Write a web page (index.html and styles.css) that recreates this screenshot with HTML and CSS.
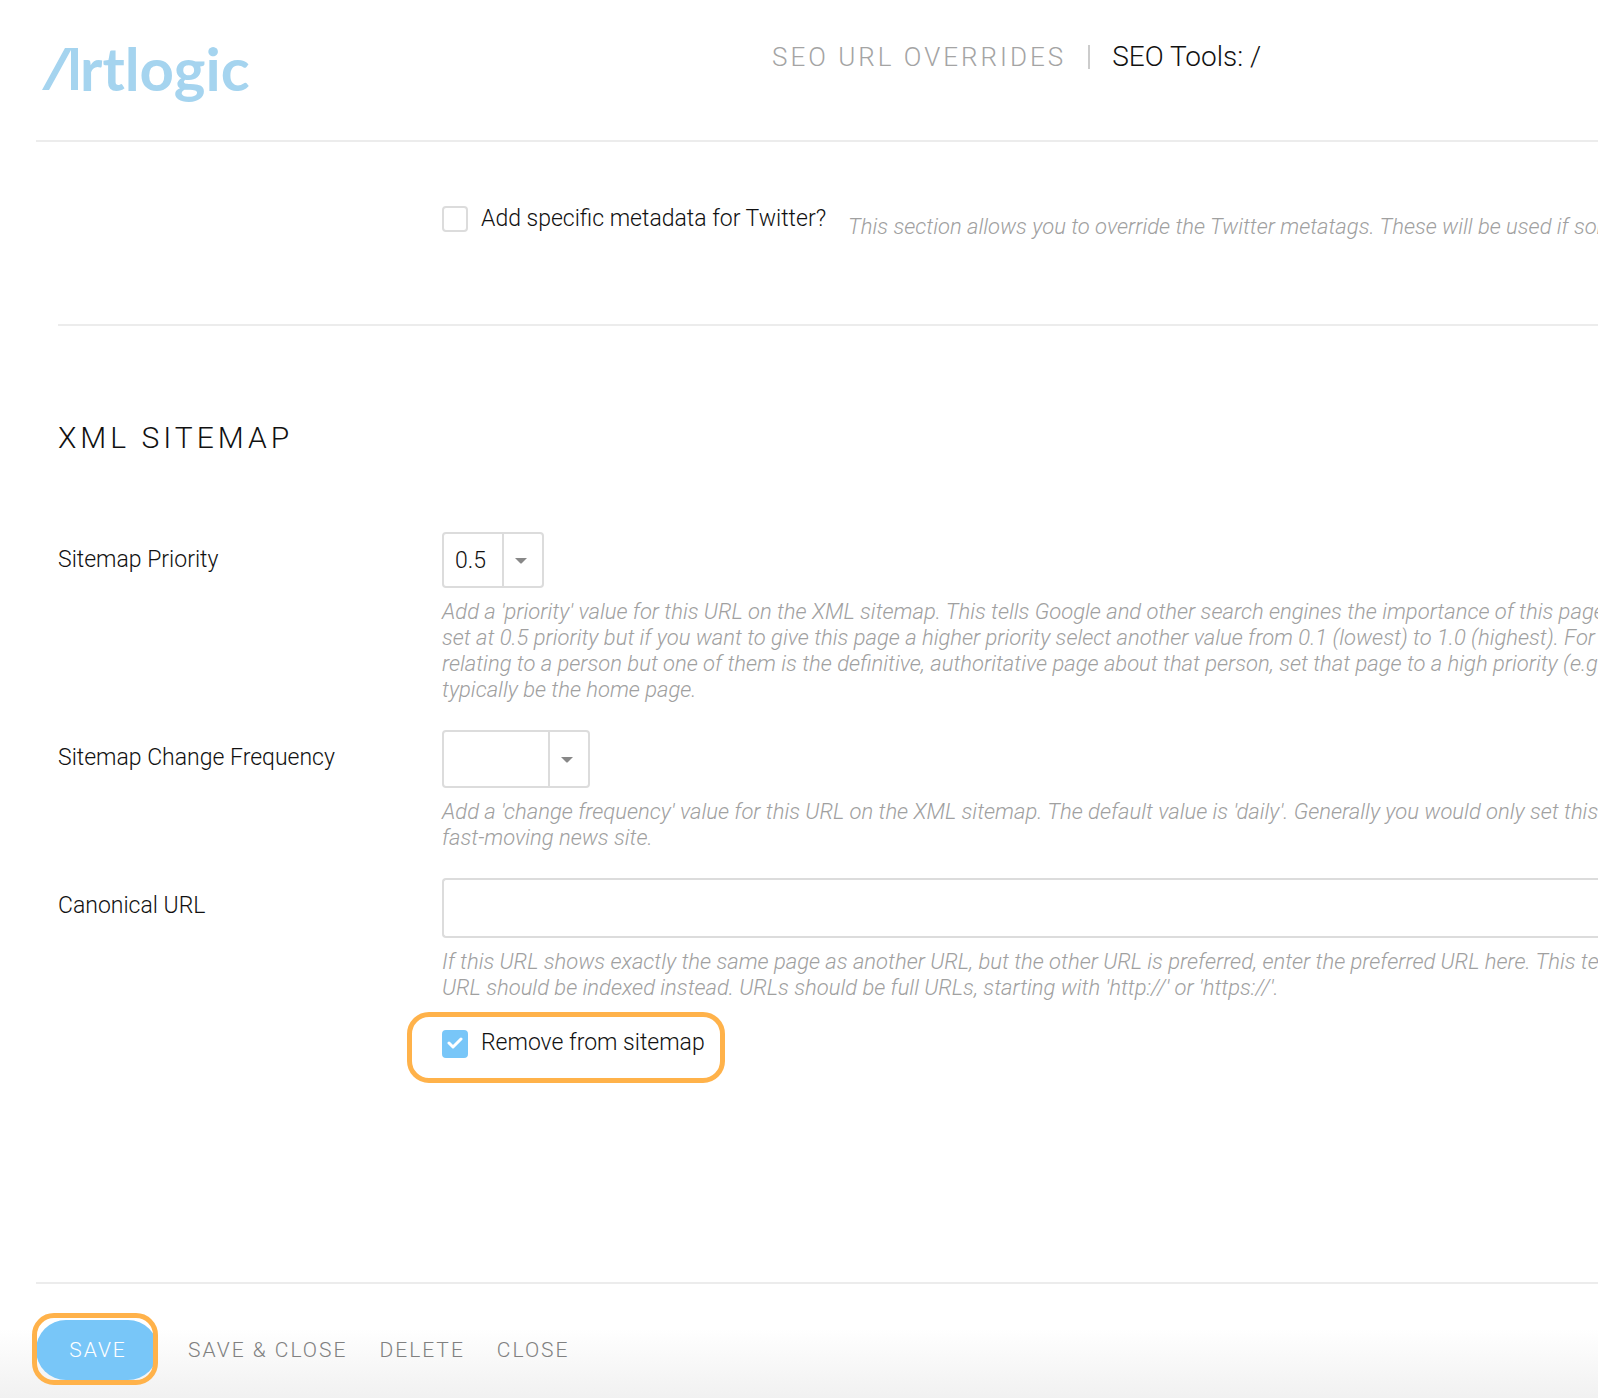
FILE: index.html
```html
<!DOCTYPE html>
<html lang="en">
<head>
<meta charset="utf-8">
<title>SEO Tools: /</title>
<meta name="viewport" content="width=device-width, initial-scale=1">
<link rel="stylesheet" href="styles.css">
</head>
<body>
<div class="page">
  <header class="header">
    <a class="logo" href="#">
      <svg class="logo-mark" viewBox="0 0 38 42" aria-hidden="true">
        <path d="M0 42 23 0h13v42h-7V2L7 42z" fill="currentColor"/>
      </svg>
      <span class="logo-text">rtlogic</span>
    </a>
    <div class="title">
      <span class="title-section">SEO URL Overrides</span>
      <h1 class="title-page">SEO Tools: /</h1>
    </div>
  </header>

  <form class="form">
    <section class="twitter">
      <label class="check">
        <input class="check-box" type="checkbox" name="twitter">
        <span>Add specific metadata for Twitter?</span>
      </label>
      <p class="hint">This section allows you to override the Twitter metatags. These will be used if someone</p>
    </section>

    <section class="sitemap">
      <h2 class="section-title">XML Sitemap</h2>

      <div class="row">
        <label class="label" for="priority">Sitemap Priority</label>
        <div class="field">
          <div class="select select-small">
            <select id="priority" name="priority"><option>0.5</option><option>1.0</option></select>
            <svg class="caret" viewBox="0 0 12 6" aria-hidden="true"><path d="M0 0h12L7 5q-1 1-2 0z" fill="currentColor"/></svg>
          </div>
          <p class="hint">Add a 'priority' value for this URL on the XML sitemap. This tells Google and other search engines the importance of this page<br>set at 0.5 priority but if you want to give this page a higher priority select another value from 0.1 (lowest) to 1.0 (highest). For instance<br>relating to a person but one of them is the definitive, authoritative page about that person, set that page to a high priority (e.g.<br>typically be the home page.</p>
        </div>
      </div>

      <div class="row">
        <label class="label" for="frequency">Sitemap Change Frequency</label>
        <div class="field">
          <div class="select select-large">
            <select id="frequency" name="frequency"><option></option><option>daily</option></select>
            <svg class="caret" viewBox="0 0 12 6" aria-hidden="true"><path d="M0 0h12L7 5q-1 1-2 0z" fill="currentColor"/></svg>
          </div>
          <p class="hint">Add a 'change frequency' value for this URL on the XML sitemap. The default value is 'daily'. Generally you would only set this<br>fast-moving news site.</p>
        </div>
      </div>

      <div class="row">
        <label class="label" for="canonical">Canonical URL</label>
        <div class="field">
          <input class="text-input" id="canonical" name="canonical" type="text">
          <p class="hint">If this URL shows exactly the same page as another URL, but the other URL is preferred, enter the preferred URL here. This tells<br>URL should be indexed instead. URLs should be full URLs, starting with 'http://' or 'https://'.</p>
          <label class="check check-marked">
            <input class="check-box" type="checkbox" name="remove" checked>
            <svg class="tick" viewBox="0 0 16 12" aria-hidden="true"><path d="M2 6l4 4 8-8" fill="none" stroke="currentColor" stroke-width="3" stroke-linecap="round" stroke-linejoin="round"/></svg>
            <span>Remove from sitemap</span>
          </label>
        </div>
      </div>
    </section>
  </form>

  <footer class="footer">
    <div class="actions">
      <span class="save-wrap"><button class="save" type="button">Save</button></span>
      <button class="action" type="button">Save &amp; Close</button>
      <button class="action" type="button">Delete</button>
      <button class="action" type="button">Close</button>
    </div>
  </footer>
</div>
</body>
</html>
```

FILE: styles.css
```css
* {
  box-sizing: border-box;
}

body {
  margin: 0;
  background: #fff;
  color: #111;
  font-family: Roboto, "Open Sans", sans-serif;
  font-size: 23px;
  font-weight: 300;
  line-height: 26px;
}

h1,
h2,
p {
  margin: 0;
  font-weight: inherit;
}

button,
input,
select {
  font: inherit;
  color: inherit;
}

.page {
  display: flex;
  flex-direction: column;
  min-height: 100vh;
  overflow: hidden;
}

/* Header */

.header {
  display: grid;
  grid-template-columns: 736px 1fr;
  align-items: start;
  height: 142px;
  margin-left: 36px;
  padding-top: 41px;
  border-bottom: 2px solid #ececec;
}

.logo {
  display: flex;
  align-items: flex-start;
  padding: 7px 0 0 6px;
  color: #a5d4ef;
  text-decoration: none;
}

.logo-mark {
  width: 38px;
  height: 42px;
}

.logo-text {
  margin-top: -12px;
  font-family: Lato, sans-serif;
  font-size: 60px;
  font-weight: 700;
  line-height: 64px;
}

.title {
  display: flex;
  align-items: center;
  white-space: nowrap;
}

.title-section {
  color: #a4a4a4;
  font-size: 26px;
  line-height: 32px;
  letter-spacing: 3px;
  text-transform: uppercase;
}

.title-page {
  margin-left: 22px;
  padding-left: 22px;
  border-left: 2px solid #ccc;
  font-size: 28px;
  line-height: 24px;
}

/* Form */

.form {
  flex: 1;
  padding-left: 58px;
}

.twitter {
  display: flex;
  height: 184px;
  padding: 64px 0 0 384px;
  border-bottom: 2px solid #ececec;
}

.twitter .hint {
  margin: 8px 0 0 22px;
}

.section-title {
  padding: 93px 0 75px;
  font-size: 30px;
  line-height: 38px;
  letter-spacing: 4px;
  text-transform: uppercase;
}

.row {
  display: grid;
  grid-template-columns: 384px 1fr;
  padding-bottom: 27px;
}

.label {
  padding-top: 15px;
}

.field {
  min-width: 0;
}

.hint {
  margin-top: 11px;
  color: #a0a0a0;
  font-size: 22px;
  font-style: italic;
  line-height: 26px;
  white-space: nowrap;
}

.select {
  position: relative;
  height: 56px;
  border: 2px solid #dcdcdc;
  border-radius: 4px;
  background: linear-gradient(#dcdcdc, #dcdcdc) right 38px top / 2px 100% no-repeat;
}

.select-small {
  width: 102px;
}

.select-large {
  width: 148px;
  height: 58px;
}

.select select {
  width: 100%;
  height: 100%;
  padding: 2px 0 0 11px;
  border: 0;
  background: none;
  appearance: none;
}

.caret {
  position: absolute;
  top: 50%;
  right: 15px;
  width: 12px;
  height: 6px;
  margin-top: -2px;
  color: #888;
  pointer-events: none;
}

.text-input {
  display: block;
  width: 100%;
  height: 60px;
  padding: 0 12px;
  border: 2px solid #dcdcdc;
  border-right: 0;
  border-radius: 4px 0 0 4px;
}

/* Tick boxes */

.check {
  display: flex;
  align-items: flex-start;
  white-space: nowrap;
}

.check-box {
  flex: none;
  width: 26px;
  height: 26px;
  margin: 0 13px 0 0;
  border: 2px solid #dcdcdc;
  border-radius: 4px;
  background: #fff;
  appearance: none;
}

.check-box:checked {
  height: 28px;
  border-color: #78c6f8;
  background: #78c6f8;
}

.check-marked {
  position: relative;
  width: max-content;
  margin-top: 29px;
}

.tick {
  position: absolute;
  top: 7px;
  left: 5px;
  width: 16px;
  height: 12px;
  color: #fff;
}

/* Highlight rings over the marked controls */

.check-marked::after,
.save-wrap::after {
  content: "";
  position: absolute;
  border: 5px solid #ffb24a;
  border-radius: 22px;
  pointer-events: none;
}

.check-marked::after {
  inset: -18px -20px -25px -35px;
}

.save-wrap::after {
  inset: -7px 0 -5px -4px;
}

/* Footer */

.footer {
  padding-left: 36px;
  background: linear-gradient(#fff 40%, #f1f1f1);
}

.actions {
  display: flex;
  align-items: center;
  padding: 36px 0 18px;
  border-top: 2px solid #ececec;
}

.save-wrap {
  position: relative;
  margin-right: 30px;
}

.save,
.action {
  border: 0;
  font-size: 21px;
  line-height: 24px;
  letter-spacing: 2px;
  text-transform: uppercase;
}

.save {
  display: block;
  width: 122px;
  height: 60px;
  padding: 0 0 0 2px;
  border-radius: 30px;
  background: #78c6f8;
  color: #fff;
}

.action {
  margin-right: 32px;
  padding: 0;
  background: none;
  color: #808080;
}
```
